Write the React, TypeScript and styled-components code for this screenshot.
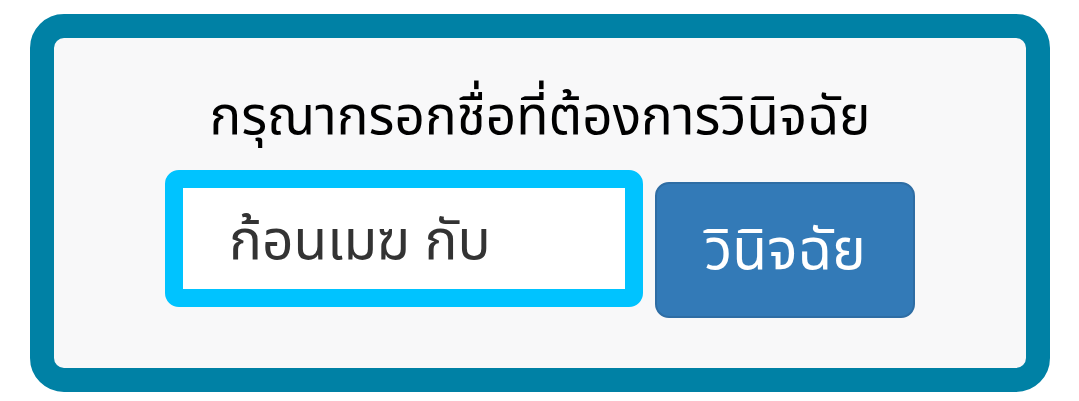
import React from "react";
import styled, { createGlobalStyle } from "styled-components";

const Global = createGlobalStyle`
  html, body { margin: 0; padding: 0; background: #ffffff; }
  body { font-family: "Noto Sans Thai", "Noto Sans", "DejaVu Sans", sans-serif; }
`;

const Page = styled.div`
  padding: 14px 29px 0 30px;
`;

const Frame = styled.div`
  box-sizing: border-box;
  width: 1020px;
  height: 378px;
  border: 24px solid #0081a5;
  border-radius: 34px;
  background: #f8f8f9;
  display: flex;
  flex-direction: column;
  align-items: center;
  padding-top: 52px;
`;

const Title = styled.div`
  font-size: 53px;
  line-height: 56px;
  color: #000;
  margin-bottom: 24px;
`;

const Row = styled.div`
  display: flex;
  align-items: flex-start;
  gap: 12px;
`;

const Field = styled.div`
  box-sizing: border-box;
  width: 478px;
  height: 137px;
  border: 18px solid #00c3ff;
  border-radius: 14px;
  background: #fff;
  display: flex;
  align-items: center;
  padding: 8px 0 0 46px;
  font-size: 55px;
  color: #333;
`;

const Button = styled.button`
  box-sizing: border-box;
  margin-top: 12px;
  width: 260px;
  height: 136px;
  border: 2px solid #2e6da4;
  border-radius: 14px;
  background: #337ab7;
  color: #fff;
  font-family: inherit;
  font-size: 57px;
  padding: 4px 0 0;
`;

export default function App() {
  return (
    <>
      <Global />
      <Page>
        <Frame>
          <Title>กรุณากรอกชื่อที่ต้องการวินิจฉัย</Title>
          <Row>
            <Field>ก้อนเมฆ กับ</Field>
            <Button>วินิจฉัย</Button>
          </Row>
        </Frame>
      </Page>
    </>
  );
}
